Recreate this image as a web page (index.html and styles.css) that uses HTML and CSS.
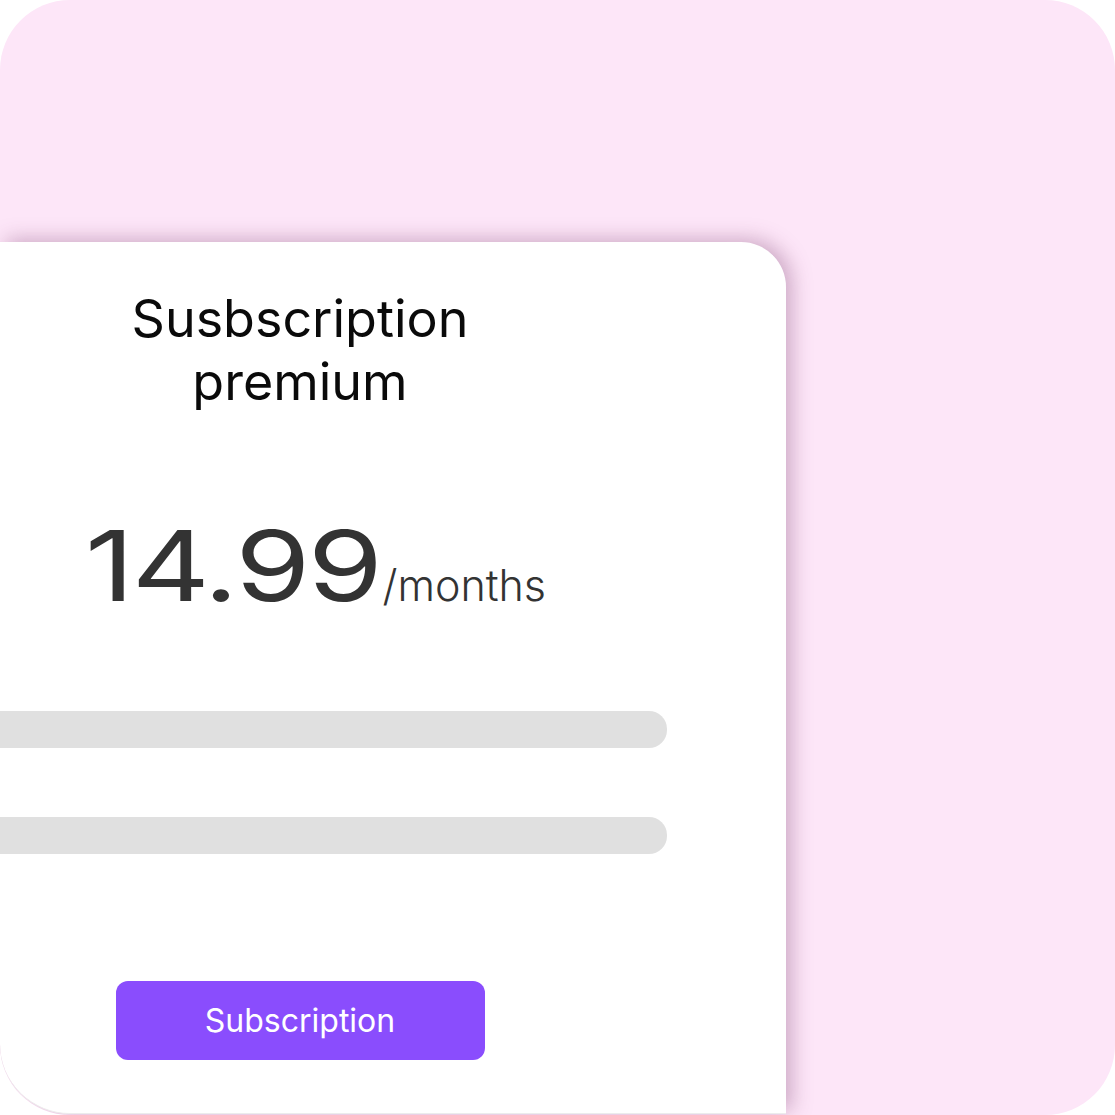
FILE: index.html
```html
<!DOCTYPE html>
<html>
<head>
<meta charset="utf-8">
<link rel="stylesheet" href="styles.css">
</head>
<body>
<div class="frame">
  <div class="card">
    <div class="col">
      <h1 class="title">Susbscription<br>premium</h1>
    </div>
    <div class="price"><span class="amount">14.99</span><span class="per">/months</span></div>
    <div class="bars">
      <div class="bar"></div>
      <div class="bar"></div>
    </div>
    <div class="col">
      <button class="btn">Subscription</button>
    </div>
  </div>
</div>
</body>
</html>
```
FILE: styles.css
```css
html, body {
  margin: 0;
  padding: 0;
  background: #ffffff;
}
body {
  font-family: "Inter", "Liberation Sans", sans-serif;
}
.frame {
  width: 1115px;
  height: 1115px;
  background: #fde6f8;
  border-radius: 70px;
  overflow: hidden;
  display: flex;
  flex-direction: column;
}
.card {
  margin-top: 242px;
  width: 786px;
  height: 871px;
  background: #ffffff;
  border-radius: 0 45px 0 70px;
  border-bottom: 1px solid #ececec;
  box-shadow: 6px -3px 20px rgba(130, 70, 115, 0.38);
  display: flex;
  flex-direction: column;
  flex-shrink: 0;
}
.col {
  width: 600px;
  display: flex;
  justify-content: center;
}
.title {
  margin: 45px 0 0;
  font-weight: 400;
  font-size: 52px;
  line-height: 63px;
  color: #0a0a0a;
  text-align: center;
}
.price {
  margin-top: 98px;
  padding-left: 85px;
  display: flex;
  align-items: baseline;
  color: #333333;
}
.amount {
  display: inline-block;
  font-size: 97px;
  line-height: 110px;
  font-weight: 400;
  transform: scaleX(1.25);
  transform-origin: left center;
  margin-right: 61px;
  letter-spacing: -2px;
}
.per {
  font-size: 43px;
  font-weight: 300;
}
.bars {
  margin-top: 90px;
  display: flex;
  flex-direction: column;
  gap: 69px;
}
.bar {
  width: 667px;
  height: 37px;
  background: #e0e0e0;
  border-radius: 0 18px 18px 0;
}
.btn {
  margin-top: 127px;
  width: 369px;
  height: 79px;
  border: none;
  border-radius: 12px;
  background: #8a4dfd;
  color: #ffffff;
  font-family: "Inter", "Liberation Sans", sans-serif;
  font-size: 32px;
  font-weight: 400;
}
```
